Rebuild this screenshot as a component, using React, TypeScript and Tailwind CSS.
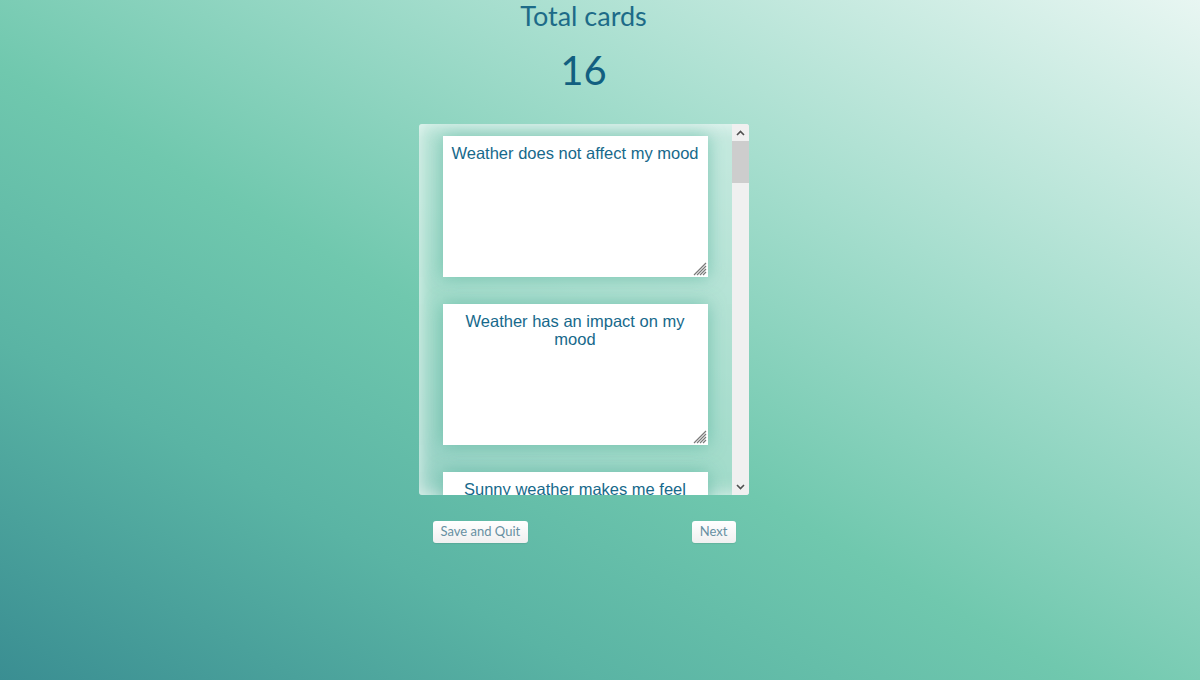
import React from "react";

const cards = [
  "Weather does not affect my mood",
  "Weather has an impact on my mood",
  "Sunny weather makes me feel better",
];

function Grip() {
  return (
    <svg
      className="absolute right-[1px] bottom-[1px] pointer-events-none"
      width="15"
      height="15"
      viewBox="0 0 15 15"
    >
      <path
        d="M14 2 L2 14 M14 5 L5 14 M14 8 L8 14 M14 11 L11 14"
        stroke="#7a7a7a"
        strokeWidth="1.2"
      />
    </svg>
  );
}

export default function App() {
  return (
    <div className="w-[1200px] h-[680px] overflow-hidden bg-[linear-gradient(to_top_right,#3a8e92_0%,#5ab4a4_25%,#70c8ae_45%,#a6dece_70%,#e8f6f2_100%)]">
      <div className="flex flex-col items-center pr-[33px] font-['Lato',sans-serif]">
        <div className="pt-[1px] h-[30px] text-[27px] leading-[30px] text-[#1d6b88]">Total cards</div>
        <div className="mt-[20px] h-[40px] text-[40px] leading-[40px] text-[#125f80]">16</div>

        {/* Card list */}
        <div className="mt-[34px] flex w-[330px] h-[371px] rounded-[3px] overflow-hidden bg-white/35 shadow-[inset_0_0_18px_rgba(255,255,255,0.75)]">
          <div className="flex-1 overflow-hidden pt-[12px] pl-[24px] flex flex-col gap-[27px]">
            {cards.map((text) => (
              <div key={text} className="relative shrink-0 w-[265px] h-[141px] shadow-[0_0_16px_rgba(70,170,145,0.55)]">
                <textarea
                  readOnly
                  defaultValue={text}
                  className="block w-full h-full resize-none bg-white px-[5px] pt-[8px] text-center text-[16.5px] leading-[18px] text-[#17698b] font-['Liberation_Sans',Arial,sans-serif] outline-none"
                />
                <Grip />
              </div>
            ))}
          </div>

          {/* Scrollbar */}
          <div className="w-[17px] bg-[#f0f0f0] flex flex-col">
            <div className="h-[17px] flex items-center justify-center">
              <svg width="9" height="6" viewBox="0 0 9 6">
                <path d="M1 5 L4.5 1.5 L8 5" stroke="#505050" strokeWidth="1.6" fill="none" />
              </svg>
            </div>
            <div className="h-[42px] bg-[#cdcdcd]" />
            <div className="flex-1" />
            <div className="h-[17px] flex items-center justify-center">
              <svg width="9" height="6" viewBox="0 0 9 6">
                <path d="M1 1 L4.5 4.5 L8 1" stroke="#505050" strokeWidth="1.6" fill="none" />
              </svg>
            </div>
          </div>
        </div>

        {/* Actions */}
        <div className="mt-[26px] w-[330px] pl-[14px] pr-[13px] flex justify-between">
          <button className="h-[22px] px-[8px] rounded-[3px] bg-[linear-gradient(#ffffff,#f0f0f0)] text-[13px] text-[#6790a2] shadow-[0_1px_1px_rgba(0,0,0,0.08)]">
            Save and Quit
          </button>
          <button className="h-[22px] px-[8px] rounded-[3px] bg-[linear-gradient(#ffffff,#f0f0f0)] text-[13px] text-[#6790a2] shadow-[0_1px_1px_rgba(0,0,0,0.08)]">
            Next
          </button>
        </div>
      </div>
    </div>
  );
}
